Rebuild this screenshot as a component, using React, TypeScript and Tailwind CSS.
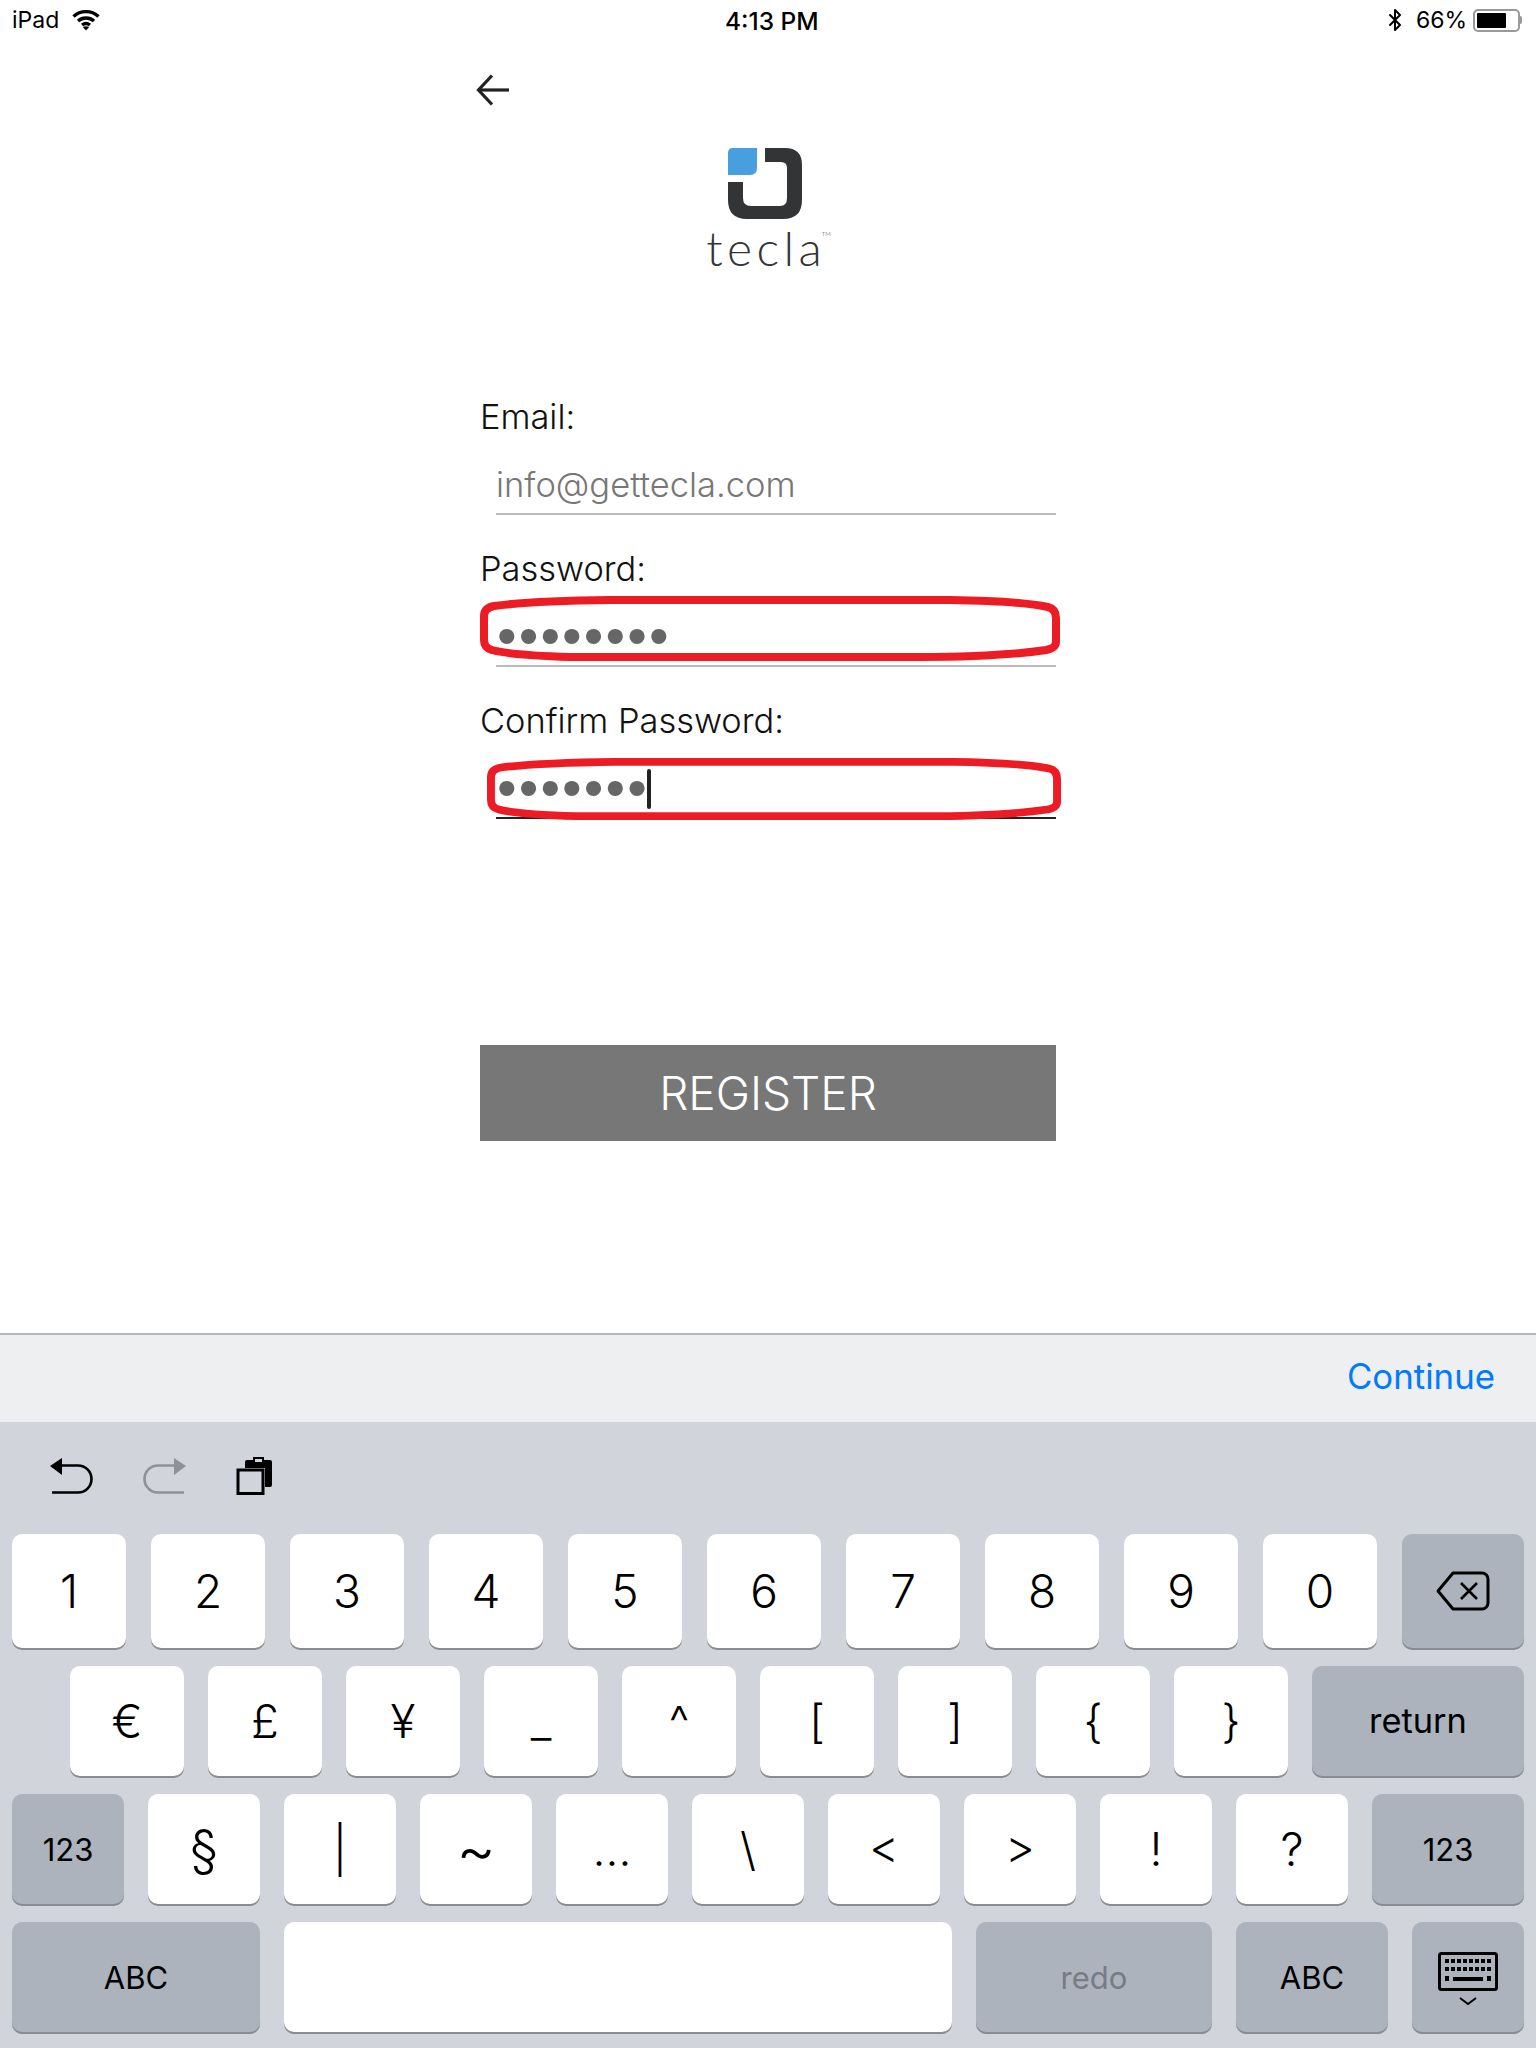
import { Bluetooth } from 'lucide-react';

const font = "font-['Inter','Liberation_Sans',sans-serif]";

const RedLoop = ({ className }: { className: string }) => (
  <svg className={className} viewBox="0 0 580 65" preserveAspectRatio="none" fill="none" stroke="#ed1c24" strokeWidth="8">
    <path d="M130 4 H470 Q540 5 568 11 Q576 13 576 22 V46 Q576 52 566 54 Q520 61 440 61 H90 Q30 59 12 54 Q4 52 4 44 V20 Q4 12 14 10 Q50 5 130 4 Z" />
  </svg>
);

const Field = ({ label, children, line }: { label: string; children: React.ReactNode; line: string }) => (
  <div className="mb-[28px]">
    <div className="h-[50px] pt-[2px] flex items-center text-[34.4px] font-light text-[#111]">{label}</div>
    <div className={`relative h-[74px] ml-[16px] border-b-2 ${line}`}>{children}</div>
  </div>
);

const Key = ({ w, gray, children, h = 'h-[110px]' }: { w: string; gray?: boolean; children?: React.ReactNode; h?: string }) => (
  <div
    className={`${w} ${h} shrink-0 rounded-[10px] flex items-center justify-center text-black shadow-[0_2px_0_#898b8f] ${
      gray ? 'bg-[#acb3bc]' : 'bg-white'
    }`}
  >
    {children}
  </div>
);

const row1 = ['1', '2', '3', '4', '5', '6', '7', '8', '9', '0'];
const row2 = ['€', '£', '¥', '_', '^', '[', ']', '{', '}'];
const row3 = [
  { k: '§', c: 'text-[52px]' },
  { k: '|', c: '' },
  { k: '~', c: 'text-[60px]' },
  { k: '…', c: '' },
  { k: '\\', c: '' },
  { k: '<', c: 'pb-[6px]' },
  { k: '>', c: 'pb-[6px]' },
  { k: '!', c: '' },
  { k: '?', c: '' },
];

export default function App() {
  return (
    <div className={`${font} w-[1536px] h-[2048px] bg-white flex flex-col overflow-hidden`}>
      {/* Status bar */}
      <div className="relative h-[40px] shrink-0 flex items-center justify-between pl-[12px] pr-[14px] text-[23px] text-black">
        <div className="flex items-center gap-[13px]">
          <span>iPad</span>
          <svg width="28" height="22" viewBox="0 0 28 22" fill="none" stroke="black" strokeWidth="3.4">
            <path d="M1.5 7.5 C8.5 1 19.5 1 26.5 7.5" />
            <path d="M6 12 C10.5 8 17.5 8 22 12" />
            <path d="M10 16 C12.5 14 15.5 14 18 16" />
            <path d="M14 21.5 L10.8 18 Q14 16.5 17.2 18 Z" fill="black" stroke="none" />
          </svg>
        </div>
        <span className="absolute left-[725px] top-[3px] font-medium text-[24.5px]">4:13 PM</span>
        <div className="flex items-center gap-[8px]">
          <Bluetooth size={24} strokeWidth={2} />
          <span className="ml-[1px]">66%</span>
          <div className="flex items-center ml-[-2px]">
            <div className="w-[47px] h-[23px] rounded-[5px] border-2 border-[#999] p-[2px]">
              <div className="w-[29px] h-full bg-black rounded-[1px]" />
            </div>
            <div className="w-[2px] h-[8px] bg-[#999] rounded-r-[2px]" />
          </div>
        </div>
      </div>

      {/* Form */}
      <div className="w-[576px] mx-auto flex-1">
        <div className="pt-[34px] h-[108px]">
          <svg className="ml-[-4px]" width="34" height="32" viewBox="0 0 34 32" fill="none" stroke="#222" strokeWidth="3.2">
            <path d="M33 16 H3" />
            <path d="M16 1.5 L2.5 16 L16 30.5" />
          </svg>
        </div>
        <div className="flex flex-col items-center ml-[-7px]">
          <svg width="74" height="71" viewBox="0 0 74 71">
            <path
              fill="#333436"
              d="M37 0 H57 Q74 0 74 17 V52 Q74 71 55 71 H19 Q0 71 0 52 V34 H15 V50 Q15 58 23 58 H52 Q59 58 59 50 V20 Q59 14 53 14 H37 Z"
            />
            <path fill="#479fdf" d="M5 0 H29 V20 Q29 27 22 27 H0 V5 Q0 0 5 0 Z" />
          </svg>
          <div className="h-[58px] ml-[8px] flex items-start font-['Lato',sans-serif] font-light text-[#333436] text-[48px] leading-[58px]">
            <span className="tracking-[4.4px]">tecl</span>
            <span>a</span>
            <span className="text-[6px] leading-[30px]">TM</span>
          </div>
        </div>

        <div className="mt-[114px]">
          <Field label="Email:" line="border-[#bbb]">
            <div className="h-full flex items-center text-[34.5px] font-light text-[#777] pt-[16px]">info@gettecla.com</div>
          </Field>
          <Field label="Password:" line="border-[#bbb]">
            <div className="h-full flex items-center text-[#666] text-[56px] leading-none tracking-[2.1px] font-['Liberation_Sans',sans-serif] pt-[13px] ml-[1px]">
              ••••••••
            </div>
            <RedLoop className="absolute left-[-16px] top-[3px] w-[580px] h-[65px]" />
          </Field>
          <Field label="Confirm Password:" line="border-[#222]">
            <div className="h-full flex items-center text-[#666] text-[56px] leading-none tracking-[2.1px] font-['Liberation_Sans',sans-serif] pt-[13px] ml-[1px]">
              •••••••
            </div>
            <div className="absolute left-[151px] top-[24px] w-[4px] h-[40px] bg-[#222] rounded-full" />
            <RedLoop className="absolute left-[-9px] top-[13px] w-[574px] h-[62px]" />
          </Field>
        </div>

        <div className="mt-[226px] h-[96px] bg-[#777] flex items-center justify-center text-white text-[46px] font-light">REGISTER</div>
      </div>

      {/* Input accessory bar */}
      <div className="h-[89px] shrink-0 bg-[#eeeff1] border-t-2 border-[#b4b5b6] flex items-center justify-end pr-[41px] pb-[4px]">
        <span className="text-[#007aff] text-[34.8px]">Continue</span>
      </div>

      {/* Keyboard */}
      <div className="h-[626px] shrink-0 bg-[#d1d4db]">
        <div className="h-[112px] flex items-center">
          <svg className="ml-[48px] mt-[-4px]" width="46" height="42" viewBox="0 0 46 42" fill="none" stroke="black" strokeWidth="2.6">
            <path d="M2 11 L14 3 V20 Z" fill="black" stroke="none" />
            <path d="M12 10.5 H30 A13.5 13.5 0 0 1 30 37.5 H4" />
          </svg>
          <svg className="ml-[48px] mt-[-4px]" width="46" height="42" viewBox="0 0 46 42" fill="none" stroke="#8e9196" strokeWidth="2.6">
            <path d="M44 11 L32 3 V20 Z" fill="#8e9196" stroke="none" />
            <path d="M34 10.5 H16 A13.5 13.5 0 0 0 16 37.5 H42" />
          </svg>
          <svg className="ml-[48px] mt-[-4px]" width="38" height="38" viewBox="0 0 38 38">
            <path fill="black" d="M9 11 V5 a2 2 0 0 1 2 -2 H17 V0 H28 V3 H34 a2 2 0 0 1 2 2 V28 a2 2 0 0 1 -2 2 H29 V11 Z" />
            <rect x="19" y="2" width="7" height="3" fill="#d1d4db" />
            <rect x="2" y="13" width="25" height="23.5" fill="#d1d4db" stroke="black" strokeWidth="3" />
          </svg>
        </div>

        <div className="flex flex-col gap-[18px] pl-[12px] text-[46px] font-light">
          <div className="flex gap-[25px]">
            {row1.map((k) => (
              <Key key={k} w="w-[114px]" h="h-[114px]">{k}</Key>
            ))}
            <Key w="w-[122px]" h="h-[114px]" gray>
              <svg width="54" height="40" viewBox="0 0 54 40" fill="none" stroke="black" strokeWidth="3" strokeLinejoin="round">
                <path d="M17 2 H46 a6 6 0 0 1 6 6 V32 a6 6 0 0 1 -6 6 H17 L2 20 Z" />
                <path strokeWidth="2.6" d="M25 12 L41 28 M41 12 L25 28" />
              </svg>
            </Key>
          </div>

          <div className="flex gap-[24px] pl-[58px]">
            {row2.map((k) => (
              <Key key={k} w="w-[114px]">{k}</Key>
            ))}
            <Key w="w-[212px]" gray><span className="text-[34.4px] font-normal">return</span></Key>
          </div>

          <div className="flex gap-[24px]">
            <Key w="w-[112px]" gray><span className="text-[31px] font-normal pt-[2px]">123</span></Key>
            {row3.map(({ k, c }) => (
              <Key key={k} w="w-[112px]"><span className={c}>{k}</span></Key>
            ))}
            <Key w="w-[152px]" gray><span className="text-[31px] font-normal pt-[2px]">123</span></Key>
          </div>

          <div className="flex gap-[24px]">
            <Key w="w-[248px]" gray><span className="text-[31px] font-normal pt-[2px]">ABC</span></Key>
            <Key w="w-[668px]" />
            <Key w="w-[236px]" gray><span className="text-[31px] font-normal pt-[2px] text-[#777c85]">redo</span></Key>
            <Key w="w-[152px]" gray><span className="text-[31px] font-normal pt-[2px]">ABC</span></Key>
            <Key w="w-[112px]" gray>
              <svg width="60" height="54" viewBox="0 0 60 54" className="mt-[4px]">
                <rect x="1.5" y="1.5" width="57" height="36" rx="2" fill="none" stroke="black" strokeWidth="3" />
                {[0, 1, 2, 3, 4, 5, 6, 7].map((i) => (
                  <rect key={i} x={7 + i * 6} y="7" width="4" height="4" fill="black" />
                ))}
                {[0, 1, 2, 3, 4, 5, 6, 7].map((i) => (
                  <rect key={i} x={7 + i * 6} y="15" width="4" height="4" fill="black" />
                ))}
                <rect x="7" y="24" width="4" height="5" fill="black" />
                <rect x="15" y="25" width="30" height="4" fill="black" />
                <rect x="49" y="24" width="4" height="5" fill="black" />
                <path d="M22 46 L30 52 L38 46" fill="none" stroke="black" strokeWidth="2" />
              </svg>
            </Key>
          </div>
        </div>
      </div>
    </div>
  );
}
